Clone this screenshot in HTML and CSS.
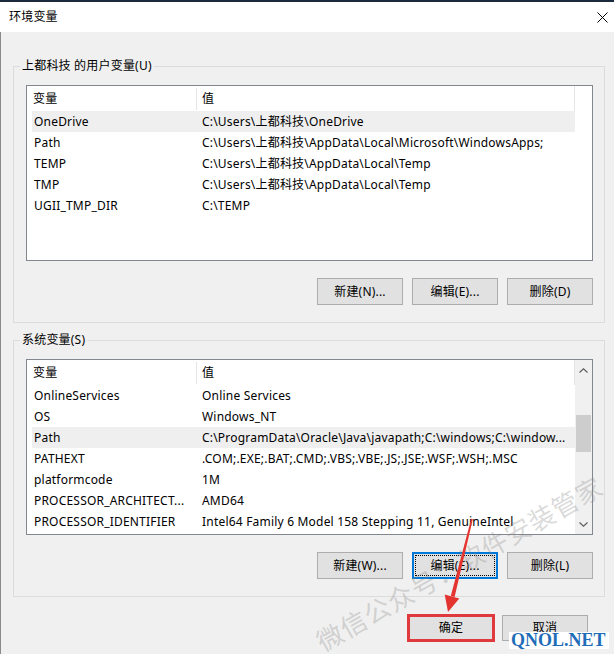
FILE: index.html
```html
<!DOCTYPE html>
<html lang="zh-CN">
<head>
<meta charset="utf-8">
<title>环境变量</title>
<link rel="stylesheet" href="styles.css">
</head>
<body>
<div class="window">
  <div class="titlebar">
    <span class="title">环境变量</span>
    <svg class="close" width="11" height="11" viewBox="0 0 11 11"><path d="M0.5 0.5L10.5 10.5M10.5 0.5L0.5 10.5" stroke="#000" stroke-width="1" fill="none"/></svg>
  </div>
  <div class="content">
    <fieldset class="group">
      <legend>上都科技 的用户变量(U)</legend>
      <div class="group-body">
        <div class="list">
          <div class="cols">
            <div class="head"><div class="hc1">变量</div><div class="hc2">值</div></div>
            <div class="row sel"><div class="c1">OneDrive</div><div class="c2">C:\Users\上都科技\OneDrive</div></div>
            <div class="row"><div class="c1">Path</div><div class="c2">C:\Users\上都科技\AppData\Local\Microsoft\WindowsApps;</div></div>
            <div class="row"><div class="c1">TEMP</div><div class="c2">C:\Users\上都科技\AppData\Local\Temp</div></div>
            <div class="row"><div class="c1">TMP</div><div class="c2">C:\Users\上都科技\AppData\Local\Temp</div></div>
            <div class="row"><div class="c1">UGII_TMP_DIR</div><div class="c2">C:\TEMP</div></div>
          </div>
        </div>
        <div class="buttons">
          <button class="btn">新建(N)...</button>
          <button class="btn">编辑(E)...</button>
          <button class="btn">删除(D)</button>
        </div>
      </div>
    </fieldset>

    <fieldset class="group">
      <legend>系统变量(S)</legend>
      <div class="group-body">
        <div class="list">
          <div class="cols">
            <div class="head"><div class="hc1">变量</div><div class="hc2">值</div></div>
            <div class="row"><div class="c1">OnlineServices</div><div class="c2">Online Services</div></div>
            <div class="row"><div class="c1">OS</div><div class="c2">Windows_NT</div></div>
            <div class="row sel"><div class="c1">Path</div><div class="c2">C:\ProgramData\Oracle\Java\javapath;C:\windows;C:\window...</div></div>
            <div class="row"><div class="c1">PATHEXT</div><div class="c2">.COM;.EXE;.BAT;.CMD;.VBS;.VBE;.JS;.JSE;.WSF;.WSH;.MSC</div></div>
            <div class="row"><div class="c1">platformcode</div><div class="c2">1M</div></div>
            <div class="row"><div class="c1">PROCESSOR_ARCHITECT...</div><div class="c2">AMD64</div></div>
            <div class="row"><div class="c1">PROCESSOR_IDENTIFIER</div><div class="c2">Intel64 Family 6 Model 158 Stepping 11, GenuineIntel</div></div>
          </div>
          <div class="vscroll">
            <div class="arr"><svg width="9" height="5" viewBox="0 0 9 5"><path d="M0.5 4.5L4.5 0.8L8.5 4.5" stroke="#606060" stroke-width="1.2" fill="none"/></svg></div>
            <div class="thumb"></div>
            <div class="spacer"></div>
            <div class="arr"><svg width="9" height="5" viewBox="0 0 9 5"><path d="M0.5 0.5L4.5 4.2L8.5 0.5" stroke="#606060" stroke-width="1.2" fill="none"/></svg></div>
          </div>
        </div>
        <div class="buttons">
          <button class="btn">新建(W)...</button>
          <button class="btn focus">编辑(E)...</button>
          <button class="btn">删除(L)</button>
        </div>
      </div>
    </fieldset>

    <div class="dialog-buttons">
      <button class="btn ok">确定</button>
      <button class="btn">取消</button>
    </div>
  </div>

  <div class="watermark">微信公众号：软件安装管家</div>
  <svg class="arrow" width="614" height="654" viewBox="0 0 614 654">
    <polygon points="472.8,519.2 471.2,518.8 450.8,596 454.6,597" fill="#e3342f"/>
    <polygon points="448,612 444.7,594.6 459.3,598.4" fill="#e3342f"/>
  </svg>
  <div class="qnol">QNOL.NET</div>
</div>
</body>
</html>
```

FILE: styles.css
```css
html, body {
  margin: 0;
  padding: 0;
}

body {
  width: 614px;
  height: 654px;
  overflow: hidden;
  background: #f0f0f0;
  font-family: "Noto Sans", "Noto Sans CJK SC", sans-serif;
  font-size: 12px;
  letter-spacing: 0.2px;
  color: #000;
}

.window {
  position: relative;
  height: 654px;
}

.titlebar {
  height: 30px;
  border-top: 2px solid #1a2a3c;
  background: #fff;
  display: flex;
  align-items: center;
  padding: 0 6px 0 9px;
}

.title {
  line-height: 16px;
}

.close {
  margin-left: auto;
  display: block;
}

.content {
  border-left: 1px solid #8a8a8a;
  padding: 26px 0 0 12px;
  height: 622px;
  box-sizing: border-box;
}

.group {
  width: 592px;
  box-sizing: border-box;
  margin: 0 0 9px 0;
  padding: 0;
  border: 1px solid #dcdcdc;
  min-width: 0;
}

.group legend {
  margin-left: 6px;
  padding: 0 2px;
  line-height: 16px;
  font-size: 12px;
}

.group-body {
  padding: 11px 11px 17px 12px;
}

.list {
  width: 567px;
  height: 176px;
  box-sizing: border-box;
  border: 1px solid #828790;
  background: #fff;
  display: flex;
  overflow: hidden;
}

.cols {
  width: 548px;
  flex: none;
}

.head {
  display: flex;
  height: 25px;
}

.hc1 {
  width: 170px;
  box-sizing: border-box;
  padding-left: 6px;
  margin: 2px 0 1px;
  line-height: 22px;
  border-right: 1px solid #e5e5e5;
}

.hc2 {
  flex: 1;
  padding-left: 5px;
  line-height: 25px;
  border-right: 1px solid #e5e5e5;
}

.row {
  display: grid;
  grid-template-columns: 164px 1fr;
  margin-left: 5px;
  height: 21px;
  line-height: 21px;
  white-space: nowrap;
}

.row.sel {
  background: #efefef;
}

.c1 {
  padding-left: 2px;
  overflow: hidden;
}

.c2 {
  padding-left: 6px;
  overflow: hidden;
}

.vscroll {
  width: 17px;
  flex: none;
  margin-left: auto;
  background: #f0f0f0;
  display: flex;
  flex-direction: column;
}

.arr {
  height: 20px;
  display: flex;
  align-items: center;
  justify-content: center;
}

.arr svg {
  display: block;
}

.thumb {
  height: 37px;
  margin: 35px 1px 0;
  background: #cdcdcd;
}

.spacer {
  flex: 1;
}

.buttons {
  display: flex;
  justify-content: flex-end;
  gap: 9px;
  margin-top: 17px;
}

.btn {
  width: 86px;
  height: 27px;
  box-sizing: border-box;
  background: #e1e1e1;
  border: 1px solid #adadad;
  border-radius: 0;
  padding: 0;
  margin: 0;
  font-family: "Noto Sans", "Noto Sans CJK SC", sans-serif;
  font-size: 12px;
  letter-spacing: 0.2px;
  color: #000;
  line-height: 16px;
}

.btn.focus {
  border: 2px solid #0078d7;
  outline: 1px dotted #000;
  outline-offset: -4px;
}

.dialog-buttons {
  display: flex;
  justify-content: flex-end;
  gap: 8px;
  margin-top: 18px;
  padding-right: 26px;
}

.dialog-buttons .btn {
  height: 26px;
}

.btn.ok {
  outline: 3px solid #e0393e;
  outline-offset: -2px;
}

.watermark {
  position: absolute;
  left: 459px;
  top: 563px;
  transform: translate(-50%, -50%) rotate(-29.5deg);
  white-space: nowrap;
  font-family: "Noto Sans CJK SC", sans-serif;
  font-size: 26px;
  letter-spacing: 1px;
  line-height: 1;
  color: rgba(130, 130, 130, 0.3);
  pointer-events: none;
}

.arrow {
  position: absolute;
  left: 0;
  top: 0;
  pointer-events: none;
}

.qnol {
  position: absolute;
  left: 509px;
  top: 632px;
  height: 17px;
  padding: 0 3px 0 2px;
  background: #fff;
  font-family: "Liberation Serif", serif;
  font-weight: bold;
  font-size: 18px;
  letter-spacing: 0;
  line-height: 17px;
  color: #1f6db8;
}
```
